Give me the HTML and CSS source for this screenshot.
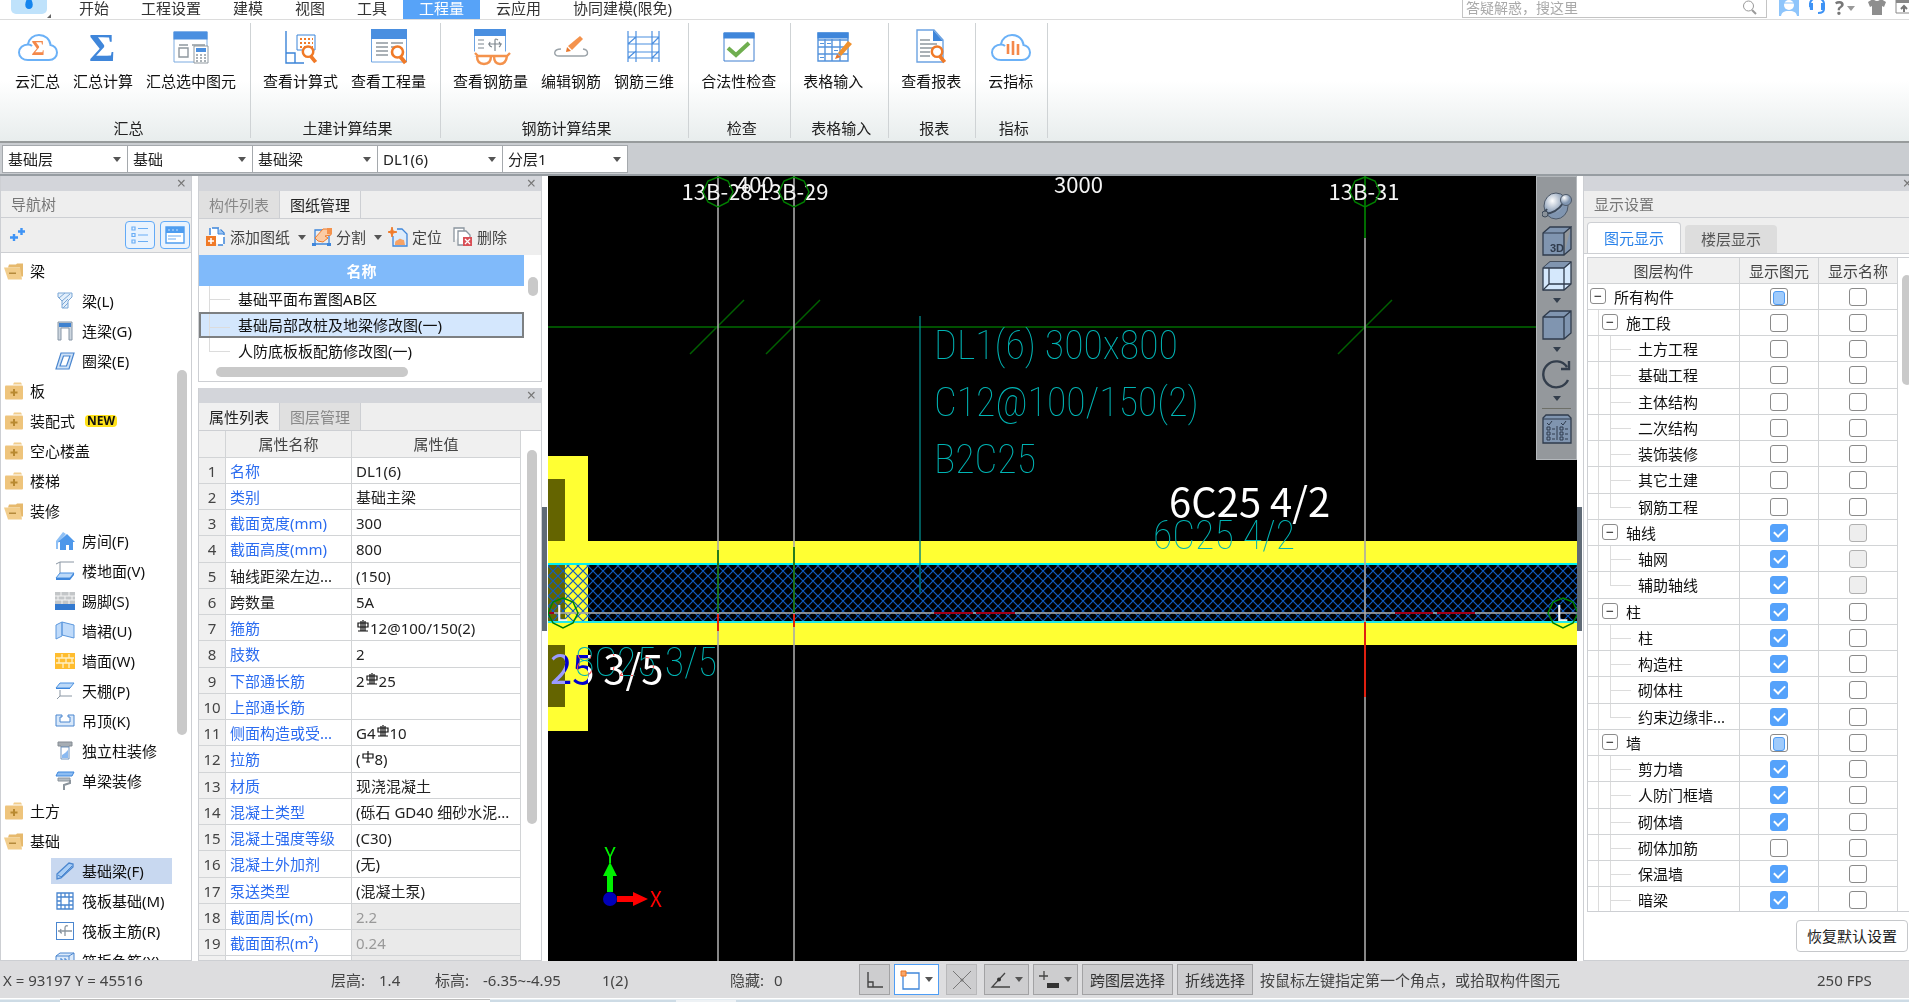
FILE: index.html
```html
<!DOCTYPE html>
<html lang="zh-CN">
<head>
<meta charset="utf-8">
<title>工程量</title>
<link rel="stylesheet" href="styles.css">
</head>
<body>
<svg class="sprite" aria-hidden="true">
  <symbol id="folder-open" viewBox="0 0 20 17"><path d="M5 2h7l1-1h6v13h-3V5H4z" fill="#e6b96d"/><path d="M0 5h16l2 12H4z" fill="#f2cd8b"/><path d="M5 10h7v1.500H5z" fill="#b58a3c"/></symbol>
  <symbol id="folder-closed" viewBox="0 0 20 17"><path d="M9 2l1-2h7l1 2z" fill="#f2cd8b"/><rect x="1" y="3" width="18" height="14" rx="1" fill="#eec47c"/><path d="M9 6.500h2V9h2.500v2H11v2.500H9V11H6.500V9H9z" fill="#b9892f"/></symbol>
  <symbol id="i-beam" viewBox="0 0 20 20"><path d="M3 2h14v4l-4 4v7H7v-7L3 6z" fill="#e3effb" stroke="#7ba7d6"/><path d="M4 7l6-5M7 10l8-7M7 14l6-6M8 17l5-5" stroke="#7ba7d6"/></symbol>
  <symbol id="i-link" viewBox="0 0 20 20"><path d="M3 1h14v18h-3V7H6v12H3z" fill="#cdd6df" stroke="#8796a6"/><path d="M4 2h12v4H4z" fill="#3f82cf"/></symbol>
  <symbol id="i-ring" viewBox="0 0 20 20"><path d="M6 2h13l-5 16H1zM8.500 5L5 15h6.500L15 5z" fill="#cfe2f7" stroke="#4a86cf" stroke-width="1.200"/></symbol>
  <symbol id="i-house" viewBox="0 0 20 20"><path d="M1 10L8 1l3 2-8 9v6H1z" fill="#8fc0f5"/><path d="M3 11l9-8 8 8h-2v8h-4v-5h-3v5H5v-8z" fill="#4d97ea"/></symbol>
  <symbol id="i-floor" viewBox="0 0 20 20"><path d="M19 1H5v12M5 1L1 3" fill="none" stroke="#8a96a3"/><path d="M5 12h14l-4 5H1z" fill="#bcd9f8" stroke="#4a90e0"/><path d="M1 17h14v2H1zM15 17l4-5v2l-4 5z" fill="#3d86dc"/></symbol>
  <symbol id="i-skirt" viewBox="0 0 20 20"><path d="M0 1h20v12H0z" fill="#c3c6c8"/><path d="M0 5h20M0 9h20M6 1v4M14 1v4M3 5v4M10 5v4M17 5v4M7 9v4M14 9v4" stroke="#f4f4f4"/><path d="M0 13h20v6H0z" fill="#3379cf"/></symbol>
  <symbol id="i-dado" viewBox="0 0 20 20"><path d="M1 4l6-3v14l-6 3zM7 1l12 3v13L7 14z" fill="#c0dbfa" stroke="#5c98dd"/></symbol>
  <symbol id="i-brick" viewBox="0 0 20 20"><rect y="2" width="20" height="16" fill="#ffbd2e"/><path d="M1 7h18M1 12h18M7 3v4M14 3v4M4 7v5M11 7v5M17 7v5M8 12v5M14 12v5" stroke="#fff0c4" stroke-width="1.300"/></symbol>
  <symbol id="i-ceil" viewBox="0 0 20 20"><path d="M5 2h14l-4 5H1z" fill="#bcd9f8" stroke="#4a90e0"/><path d="M1 7h14v1H1z" fill="#3d86dc"/><path d="M5 9v6h12M5 15l-3 3" fill="none" stroke="#8a96a3"/></symbol>
  <symbol id="i-drop" viewBox="0 0 20 20"><path d="M1 4h6v2H5v5h10V6h-2V4h6v11H1z" fill="#d8e8fa" stroke="#4a86cf"/></symbol>
  <symbol id="i-column" viewBox="0 0 20 20"><path d="M3 1h14v4h-3v1H6V5H3z" fill="#a6adb3" stroke="#858c93"/><path d="M6 6h8v12H6z" fill="#fff" stroke="#6e94be"/><path d="M7 14l3-2 3-3v8H7z" fill="#8abaf1"/></symbol>
  <symbol id="i-roller" viewBox="0 0 20 20"><path d="M3 1h16l-2 4H1z" fill="#8dbdf2" stroke="#3d86dc"/><path d="M3 7h12v3H3z" fill="#b4bbc2" stroke="#8b949c"/><path d="M15 9v3l-6 2v5" fill="none" stroke="#8b949c" stroke-width="2"/></symbol>
  <symbol id="i-fbeam" viewBox="0 0 20 20"><path d="M2 13L14 2l4 1v3L6 17l-4 1z" fill="#a9cdf5" stroke="#4a86cf" stroke-width="1.300"/><path d="M3 14l3 2L17 5" fill="none" stroke="#4a86cf"/></symbol>
  <symbol id="i-raft" viewBox="0 0 20 20"><path d="M2 2h16v16H2zM6 6h8v8H6zM2 6h4V2M14 2v4h4M2 14h4v4M14 18v-4h4M10 2v4M10 14v4M2 10h4M14 10h4" fill="none" stroke="#4a86cf" stroke-width="1.300"/></symbol>
  <symbol id="i-rebar" viewBox="0 0 20 20"><rect x="1.500" y="1.500" width="17" height="17" fill="#fff" stroke="#4a86cf"/><path d="M3 10h14M10 15V7q0-3 3-2M6 8q-2 4 1 4" fill="none" stroke="#8a959f" stroke-width="1.300"/></symbol>
  <symbol id="i-neg" viewBox="0 0 20 20"><path d="M1 5h13v13H1zM1 5l4-3h14v13l-5 3M14 5l5-3" fill="#dceafa" stroke="#4a86cf"/><path d="M5 8h2v6M9 8h2v6" fill="none" stroke="#3379cf"/></symbol>
  <symbol id="cloud" viewBox="0 0 40 38"><path d="M14 18c-1-1-2.500-1.500-4-1.500C5 16.500 1 20 1 24.500S5 32 10 32h21c5 0 8-3.500 8-7.500s-3-7-6.500-7.500C32 11 27 7 21 7c-5.500 0-10 3.500-11 9" fill="none" stroke="#6bb1f7" stroke-width="2"/></symbol>
  <symbol id="lens" viewBox="0 0 18 20"><circle cx="8" cy="7" r="5.500" fill="#fff" stroke="#f07a28" stroke-width="2.600"/><path d="M11 12l5 6" stroke="#f07a28" stroke-width="4"/></symbol>
  <symbol id="hrb" viewBox="0 0 14 14"><path d="M2 3h10v4H2zM5 1v10M9 1v10M7 0v11M2 11h10" fill="none" stroke="#111" stroke-width="1.200"/></symbol>
  <symbol id="phi" viewBox="0 0 14 14"><path d="M2 3h10v4H2zM7 0v11M5 11h4" fill="none" stroke="#111" stroke-width="1.200"/></symbol>
</svg>

<div class="app">
  <header class="menubar">
    <button class="logo" aria-label="主菜单"><svg viewBox="0 0 56 20" width="56" height="20"><rect x="11" y="-8" width="36" height="22" rx="5" fill="#bfe2fb"/><path d="M29-4c5 6 5 13 0 13s-5-7 0-13z" fill="#1585ee"/><path d="M51 14v4h-4z" fill="#666"/></svg></button>
    <nav class="menu">
      <button>开始</button><button>工程设置</button><button>建模</button><button>视图</button><button>工具</button><button class="active">工程量</button><button>云应用</button><button>协同建模(限免)</button>
    </nav>
    <div class="search">
      <input type="text" aria-label="搜索" placeholder="答疑解惑，搜这里">
      <svg width="16" height="16" viewBox="0 0 16 16"><circle cx="6.500" cy="6" r="5" fill="none" stroke="#999"/><path d="M10 10l4 4" stroke="#999" stroke-width="2"/></svg>
    </div>
    <div class="tools">
      <button aria-label="用户"><svg width="20" height="16" viewBox="0 0 20 16"><path d="M0 0h20v16H0z" fill="#8ec5fb"/><circle cx="10" cy="5" r="5" fill="#fff"/><path d="M2 16c1-5 5-5 8-5s7 0 8 5z" fill="#fff"/><path d="M5 3h10" stroke="#8ec5fb"/></svg></button>
      <button aria-label="客服"><svg width="18" height="16" viewBox="0 0 18 16"><path d="M2 7V4a7 6 0 0 1 14 0v5q0 4-6 4" fill="none" stroke="#3e93f5" stroke-width="2"/><path d="M1 3h4v7H2zM13 3h4l-1 7h-3z" fill="#3e93f5"/></svg></button>
      <button class="help" aria-label="帮助">?<i class="caret"></i></button>
      <button aria-label="皮肤"><svg width="18" height="16" viewBox="0 0 18 16"><path d="M0 2l5-3q4 4 8 0l5 3-2 5-2-1v9H4V6L2 7z" fill="#8e8e8e"/></svg></button>
      <button aria-label="收起"><svg width="18" height="16" viewBox="0 0 18 16"><path d="M1 0h17v13H1z" fill="#fff" stroke="#888"/><path d="M1 0h17v3H1z" fill="#888"/><path d="M9 12V6M6 9l3-3 3 3" fill="none" stroke="#777" stroke-width="2"/></svg></button>
    </div>
  </header>

  <section class="ribbon">
    <div class="group first"><div class="items">
      <button><svg viewBox="0 0 40 38"><use href="#cloud"/><text x="20" y="27" class="sigma small">Σ</text></svg>云汇总</button>
      <button><svg viewBox="0 0 40 38"><text x="19" y="33" class="sigma">Σ</text></svg>汇总计算</button>
      <button><svg viewBox="0 0 40 38"><path d="M3 4h33v30H3z" fill="#fff" stroke="#7cabe0"/><path d="M2.500 3.500h34v8h-34z" fill="#4a8fe0"/><path d="M8 20h9v9H8zM8 17h9M21 17h13" fill="none" stroke="#8f989f" stroke-width="1.400"/><path d="M23 18h14v17H23z" fill="#fff" stroke="#8f989f"/><path d="M25 20h10v4H25z" fill="#4a8fe0"/><path d="M25 27h10M25 30h10M25 33h10" stroke="#8f989f" stroke-width="1.600" stroke-dasharray="2 2"/></svg>汇总选中图元</button>
    </div><h2>汇总</h2></div>
    <div class="group"><div class="items">
      <button><svg viewBox="0 0 40 38"><path d="M5 3v32h18M5 25h9v10" fill="none" stroke="#3b84d8" stroke-width="1.400"/><path d="M16 7h18v15H16z" fill="#fff" stroke="#3b84d8"/><path d="M19 11h13M19 15h13M19 19h13" stroke="#f07a28" stroke-width="2" stroke-dasharray="2 2"/><use href="#lens" x="19" y="17" width="18" height="19"/></svg>查看计算式</button>
      <button><svg viewBox="0 0 40 38"><path d="M2.500 2h35v32h-35z" fill="#fff" stroke="#6ca3e2"/><path d="M2 1h36v10H2z" fill="#4a8fe0"/><path d="M7 15h12M7 19h12M7 23h12M7 27h12M22 15h12M22 19h4" stroke="#8f989f" stroke-width="1.400"/><use href="#lens" x="20" y="17" width="19" height="20"/></svg>查看工程量</button>
    </div><h2>土建计算结果</h2></div>
    <div class="group"><div class="items">
      <button><svg viewBox="0 0 40 38"><path d="M3.500 2h31v26h-31z" fill="#fff" stroke="#6ca3e2"/><path d="M3 1h32v7H3z" fill="#4a8fe0"/><path d="M7 12h6M7 16h6M7 20h6M17 16h14M24 23V12q0-2 3 0M19 14q-2 4 2 5M28 14q3 3 0 5" fill="none" stroke="#7d868d" stroke-width="1.200"/><path d="M3 26h36" stroke="#fff" stroke-width="5"/><path d="M4 25l3 3h29l3-3M6 28q0 8 7 8t7-8M23 28q0 8 6 8t7-8" fill="none" stroke="#f4924c" stroke-width="2.400"/></svg>查看钢筋量</button>
      <button><svg viewBox="0 0 40 38"><path d="M10 21c-8 0-8 7-2 7h24c6 0 6-6 0-7" fill="none" stroke="#9aa2a8" stroke-width="1.400"/><path d="M17 18L29 8l3 3-11 11z" fill="#f4924c"/><path d="M16 19l4 4-5 1z" fill="#e8762a"/></svg>编辑钢筋</button>
      <button><svg viewBox="0 0 40 38"><path d="M4 3v31M12 3v31M28 3v31M35 3v31M4 9h31M4 16h31M4 24h31M4 30h31M4 16l8-7M4 30l8-7M28 16l7-7M28 30l7-7" fill="none" stroke="#4b8fe0" stroke-width="1.200"/></svg>钢筋三维</button>
    </div><h2>钢筋计算结果</h2></div>
    <div class="group"><div class="items">
      <button><svg viewBox="0 0 40 38"><path d="M5 5h30v28H5z" fill="#fff" stroke="#3f7fd0"/><path d="M4.500 4.500h31v6h-31z" fill="#3f86da"/><path d="M9 20l8 7 13-12" fill="none" stroke="#6fae4f" stroke-width="4"/></svg>合法性检查</button>
    </div><h2>检查</h2></div>
    <div class="group wide"><div class="items">
      <button><svg viewBox="0 0 40 38"><path d="M5 5h30v28H5zM5 12h30M5 19h30M5 26h30M12 11v22M19 11v22M27 11v22" fill="#fff" stroke="#5493dc" stroke-width="1.400"/><path d="M4.500 4.500h31v6h-31z" fill="#3f86da"/><path d="M7 15.500h4M14 15.500h4M7 29.500h4M21 22.500h4" stroke="#5493dc"/><path d="M25 25l10-12 4 3-11 12z" fill="#f0912d"/><path d="M24 26l4 3-6 2z" fill="#e8762a"/></svg>表格输入</button>
    </div><h2>表格输入</h2></div>
    <div class="group"><div class="items">
      <button><svg viewBox="0 0 40 38"><path d="M6 2h17l9 10v22H6z" fill="#fff" stroke="#6ca3e2" stroke-width="1.400"/><path d="M22 2l10 11H22z" fill="#3f86da"/><path d="M9 12h10M9 16h17M9 20h19M9 24h10M9 28h10" stroke="#8f989f" stroke-width="1.300"/><use href="#lens" x="18" y="17" width="18" height="19"/></svg>查看报表</button>
    </div><h2>报表</h2></div>
    <div class="group"><div class="items">
      <button><svg viewBox="0 0 40 38"><use href="#cloud"/><path d="M17 26V16M22 27V13M27 27V16" stroke="#f4884a" stroke-width="2.600"/></svg>云指标</button>
    </div><h2>指标</h2></div>
    <div class="group rest"></div>
  </section>

  <div class="combos">
    <span><select aria-label="楼层"><option>基础层</option></select></span>
    <span><select aria-label="构件大类"><option>基础</option></select></span>
    <span><select aria-label="构件类型"><option>基础梁</option></select></span>
    <span><select aria-label="构件"><option>DL1(6)</option></select></span>
    <span><select aria-label="分层"><option>分层1</option></select></span>
  </div>

  <main class="work">
    <aside class="panel nav">
      <div class="strip"><button aria-label="关闭">×</button></div>
      <h3 class="title">导航树</h3>
      <div class="navtools">
        <svg width="16" height="16" viewBox="0 0 16 16"><path d="M4 7v7M0 10.500h8M11.500 1v7M8 4.500h7" stroke="#3e93f5" stroke-width="2.400"/></svg>
        <button class="push" aria-label="列表"><svg width="18" height="18" viewBox="0 0 18 18"><path d="M1 1h3v3H1zM1 7.500h3v3H1zM1 14h3v3H1zM7 2.500h10M7 9h10M7 15.500h10" fill="none" stroke="#6aaef5" stroke-width="1.200"/></svg></button>
        <button aria-label="窗口"><svg width="20" height="18" viewBox="0 0 20 18"><path d="M1 1h18v16H1z" fill="#fff" stroke="#4e9df0" stroke-width="1.400"/><path d="M1 1h18v6H1z" fill="#4e9df0"/><path d="M3 4h2M7 4h2M11 4h2M3 10h13M3 13h8" stroke="#9cc8f8" stroke-width="1.500"/></svg></button>
      </div>
      <ul class="tree">
        <li><button><svg><use href="#folder-open"/></svg>梁</button></li>
        <li class="sub"><button><svg><use href="#i-beam"/></svg>梁(L)</button></li>
        <li class="sub"><button><svg><use href="#i-link"/></svg>连梁(G)</button></li>
        <li class="sub"><button><svg><use href="#i-ring"/></svg>圈梁(E)</button></li>
        <li><button><svg><use href="#folder-closed"/></svg>板</button></li>
        <li><button><svg><use href="#folder-closed"/></svg>装配式<b>NEW</b></button></li>
        <li><button><svg><use href="#folder-closed"/></svg>空心楼盖</button></li>
        <li><button><svg><use href="#folder-closed"/></svg>楼梯</button></li>
        <li><button><svg><use href="#folder-open"/></svg>装修</button></li>
        <li class="sub"><button><svg><use href="#i-house"/></svg>房间(F)</button></li>
        <li class="sub"><button><svg><use href="#i-floor"/></svg>楼地面(V)</button></li>
        <li class="sub"><button><svg><use href="#i-skirt"/></svg>踢脚(S)</button></li>
        <li class="sub"><button><svg><use href="#i-dado"/></svg>墙裙(U)</button></li>
        <li class="sub"><button><svg><use href="#i-brick"/></svg>墙面(W)</button></li>
        <li class="sub"><button><svg><use href="#i-ceil"/></svg>天棚(P)</button></li>
        <li class="sub"><button><svg><use href="#i-drop"/></svg>吊顶(K)</button></li>
        <li class="sub"><button><svg><use href="#i-column"/></svg>独立柱装修</button></li>
        <li class="sub"><button><svg><use href="#i-roller"/></svg>单梁装修</button></li>
        <li><button><svg><use href="#folder-closed"/></svg>土方</button></li>
        <li><button><svg><use href="#folder-open"/></svg>基础</button></li>
        <li class="sub current"><button><svg><use href="#i-fbeam"/></svg>基础梁(F)</button></li>
        <li class="sub"><button><svg><use href="#i-raft"/></svg>筏板基础(M)</button></li>
        <li class="sub"><button><svg><use href="#i-rebar"/></svg>筏板主筋(R)</button></li>
        <li class="sub"><button><svg><use href="#i-neg"/></svg>筏板负筋(X)</button></li>
      </ul>
      <i class="thumb nav-thumb"></i>
    </aside>

    <div class="middle">
      <section class="panel drawings">
        <div class="strip"><button aria-label="关闭">×</button></div>
        <div class="tabs"><button>构件列表</button><button class="active">图纸管理</button></div>
        <div class="actions">
          <button><svg width="20" height="20" viewBox="0 0 20 20"><path d="M4 8V1h9l5 5v12h-6" fill="#fff" stroke="#3f86da" stroke-width="1.500" stroke-dasharray="7 2"/><path d="M12 1v6h6" fill="#9cc5f3" stroke="#3f86da"/><path d="M0 9h10v10H0z" fill="#f07a28"/><path d="M5 11v6M2 14h6" stroke="#fff" stroke-width="1.500"/></svg>添加图纸<i class="caret"></i></button>
          <button><svg width="20" height="20" viewBox="0 0 20 20"><path d="M3 3v14h14V3z" fill="none" stroke="#3f86da" stroke-width="1.300"/><path d="M0 16h4v3H0zM15 16h4v3h-4z" fill="#3f86da"/><path d="M3 11l8-9h8v6l-6 1 3 2-5 4-5-1z" fill="#fbcba4" stroke="#f07a28"/><path d="M15 1h5v6h-5z" fill="#f4924c"/></svg>分割<i class="caret"></i></button>
          <button><svg width="20" height="20" viewBox="0 0 20 20"><path d="M9 2h5l5 5v12H5V9" fill="#dcebfb" stroke="#3f86da" stroke-width="1.300"/><path d="M4 0l1 4 4 1-4 1-1 4-1-4-3-1 3-1z" fill="#f07a28" stroke="#f07a28"/><path d="M7 17c0-5 3-3 4-5 2-1 3 1 5 1l1 5H7z" fill="#f7a265"/></svg>定位</button>
          <button><svg width="20" height="20" viewBox="0 0 20 20"><path d="M1 15V1h10v3M5 4h8l4 4v10H5z" fill="#fff" stroke="#8b959e" stroke-width="1.300"/><path d="M10 10h9v9h-9z" fill="#d95057"/><path d="M12 12l5 5M17 12l-5 5" stroke="#fff" stroke-width="1.300"/></svg>删除</button>
        </div>
        <div class="scroller">
          <table class="sheets">
            <thead><tr><th>名称</th></tr></thead>
            <tbody><tr><td>基础平面布置图AB区</td></tr><tr class="picked"><td>基础局部改桩及地梁修改图(一)</td></tr><tr class="last"><td>人防底板板配筋修改图(一)</td></tr></tbody>
          </table>
          <i class="thumb"></i>
        </div>
        <i class="hthumb"></i>
      </section>

      <section class="panel props">
        <div class="strip"><button aria-label="关闭">×</button></div>
        <div class="tabs"><button class="active">属性列表</button><button>图层管理</button></div>
        <div class="scroller">
          <table class="grid">
            <thead><tr><th class="num"></th><th class="name">属性名称</th><th>属性值</th></tr></thead>
            <tbody>
              <tr><th>1</th><td>名称</td><td>DL1(6)</td></tr>
              <tr><th>2</th><td>类别</td><td>基础主梁</td></tr>
              <tr><th>3</th><td>截面宽度(mm)</td><td>300</td></tr>
              <tr><th>4</th><td>截面高度(mm)</td><td>800</td></tr>
              <tr class="plain"><th>5</th><td>轴线距梁左边...</td><td>(150)</td></tr>
              <tr class="plain"><th>6</th><td>跨数量</td><td>5A</td></tr>
              <tr><th>7</th><td>箍筋</td><td><svg><use href="#hrb"/></svg>12@100/150(2)</td></tr>
              <tr><th>8</th><td>肢数</td><td>2</td></tr>
              <tr><th>9</th><td>下部通长筋</td><td>2<svg><use href="#hrb"/></svg>25</td></tr>
              <tr><th>10</th><td>上部通长筋</td><td></td></tr>
              <tr><th>11</th><td>侧面构造或受...</td><td>G4<svg><use href="#hrb"/></svg>10</td></tr>
              <tr><th>12</th><td>拉筋</td><td>(<svg><use href="#phi"/></svg>8)</td></tr>
              <tr><th>13</th><td>材质</td><td>现浇混凝土</td></tr>
              <tr><th>14</th><td>混凝土类型</td><td>(砾石 GD40 细砂水泥...</td></tr>
              <tr><th>15</th><td>混凝土强度等级</td><td>(C30)</td></tr>
              <tr><th>16</th><td>混凝土外加剂</td><td>(无)</td></tr>
              <tr><th>17</th><td>泵送类型</td><td>(混凝土泵)</td></tr>
              <tr class="locked"><th>18</th><td>截面周长(m)</td><td>2.2</td></tr>
              <tr class="locked"><th>19</th><td>截面面积(m²)</td><td>0.24</td></tr>
              <tr class="locked"><th></th><td></td><td></td></tr>
            </tbody>
          </table>
          <i class="thumb"></i>
        </div>
      </section>
    </div>

    <div class="splitter"><i></i></div>

    <section class="canvas">
      <svg class="drawing" width="100%" height="100%">
        <defs><pattern id="hatch" width="10" height="10" patternUnits="userSpaceOnUse"><path d="M0 0l10 10M10 0L0 10" stroke="#0d5cc4" stroke-width="1.200"/></pattern></defs>
        <rect width="100%" height="100%" fill="#000"/>
        <rect y="280" width="40" height="275" fill="#ffff33"/>
        <rect y="365" width="100%" height="104" fill="#ffff33"/>
        <rect x="40" y="388" width="100%" height="58" fill="#000"/>
        <path d="M0 303h17v62H0zM0 388h17v58H0zM0 469h17v62H0z" fill="#646400"/>
        <rect y="388" width="100%" height="58" fill="url(#hatch)"/>
        <rect y="387" width="100%" height="2" fill="#00f0f0"/>
        <rect y="445" width="100%" height="2" fill="#20e8e8"/>
        <rect y="150" width="100%" height="2" fill="#005000"/>
        <path d="M142 178l54-54M218 178l54-54M790 178l54-54" stroke="#006000" stroke-width="1.500"/>
        <g fill="#a8a8a8" fill-opacity=".8"><rect x="169" width="2" height="100%"/><rect x="245" width="2" height="100%"/><rect x="816" y="62" width="2" height="100%"/><rect y="436" width="100%" height="2"/></g>
        <path d="M170 374v63M246 371v66" stroke="#006c00" stroke-width="2" stroke-opacity=".8"/>
        <path d="M170 438v17M246 438v13M817 446v75" stroke="#e02010" stroke-width="2"/>
        <path d="M386 437h39M428 437h39M847 437h38M889 437h38M0 437h6" stroke="#a00018" stroke-width="2"/>
        <path d="M817 0v62" stroke="#006c00" stroke-width="2"/>
        <path d="M372 140v277" stroke="#008080" stroke-opacity=".7" stroke-width="2"/>
        <g class="cad"><text x="386" y="183">DL1(6) 300x800</text><text x="386" y="240">C12@100/150(2)</text><text x="386" y="297">B2C25</text><text x="605" y="373">6C25 4/2</text><text x="27" y="500">8C25 3/5</text></g>
        <g class="label"><text x="169" y="24" class="mid">13B-28</text><text x="245" y="24" class="mid">13B-29</text><text x="816" y="24" class="mid">13B-31</text><text x="189" y="17">400</text><text x="506" y="17">3000</text><text x="8" y="445">L</text><text x="1008" y="445">L</text></g>
        <g fill="none" stroke="#008000" stroke-width="1.500"><path id="oct" d="M170 1l10 4 5 11-5 10-10 5-10-5-5-10 5-11z"/><use href="#oct" x="76"/><use href="#oct" x="647"/><use href="#oct" x="-155" y="421"/><use href="#oct" x="845" y="421"/></g>
        <g class="note"><text x="621" y="341">6C25 4/2</text><text x="2" y="508">25 3/5</text></g>
        <path d="M59 716v-16h-4l7-14 7 14h-4v16z" fill="#00f000"/>
        <path d="M69 720h16v-4l15 7-15 7v-4H69z" fill="#f00"/>
        <circle cx="62" cy="723" r="7" fill="#0000b8"/>
        <g class="axis"><text x="62" y="687" fill="#00f000">Y</text><text x="108" y="731" fill="#f00">X</text></g>
      </svg>
      <div class="viewtools">
        <button aria-label="动态观察"><svg width="30" height="30" viewBox="0 0 30 30"><defs><radialGradient id="ball" cx=".35" cy=".3"><stop offset="0" stop-color="#fff"/><stop offset="1" stop-color="#8095b0"/></radialGradient></defs><ellipse cx="14" cy="15" rx="12" ry="13" fill="url(#ball)" stroke="#4c5868"/><path d="M2 23q12 0 20-12M1 23l4-5" fill="none" stroke="#3c4858" stroke-width="2"/><circle cx="24" cy="9" r="5.500" fill="url(#ball)" stroke="#4c5868"/><circle cx="3" cy="23" r="3" fill="#8a929a" stroke="#3c4858"/></svg></button>
        <button aria-label="三维"><svg width="30" height="30" viewBox="0 0 30 30"><path d="M1 7l7-6h21l-7 6v22H1zM22 29l7-6V1" fill="#8095b0" stroke="#2f3b4c" stroke-width="1.300"/><path d="M1 7h21" stroke="#2f3b4c"/><text x="8" y="26" class="cube-text">3D</text></svg></button>
        <button aria-label="线框"><svg width="30" height="30" viewBox="0 0 30 30"><path d="M1 7l7-6h21v22l-7 6H1z" fill="#d5e8fc" stroke="#2f3b4c" stroke-width="1.300"/><path d="M1 7l7-6h21l-7 6z" fill="#8095b0"/><path d="M1 7h21v22M22 7l7-6M7 7v16h22M7 23l-6 6" fill="none" stroke="#2f3b4c" stroke-width="1.300"/></svg><i class="caret"></i></button>
        <button aria-label="实体"><svg width="30" height="30" viewBox="0 0 30 30"><path d="M1 7l7-6h21v22l-7 6H1zM1 7h21v22M22 7l7-6" fill="#8095b0" stroke="#2f3b4c" stroke-width="1.300"/></svg><i class="caret"></i></button>
        <button aria-label="旋转"><svg width="30" height="30" viewBox="0 0 30 30"><path d="M25 8A13 13 0 1 0 26 21M27 2v8h-8" fill="none" stroke="#333e4c" stroke-width="2.400"/></svg><i class="caret"></i></button>
        <hr>
        <button aria-label="显示设置"><svg width="30" height="30" viewBox="0 0 30 30"><path d="M1 4l3-3h22l3 3v25H1z" fill="#8095b0" stroke="#2f3b4c" stroke-width="1.300"/><path d="M1 5h28M15 12v14M5 9l2 2 3-4M19 9l2 2 3-4M5 13h3v3H5zM5 18h3v3H5zM5 23h3v3H5zM18 13h3v3h-3zM18 18h3v3h-3zM18 23h3v3h-3zM10 15h3M10 20h3M10 25h3M23 15h3M23 20h3M23 25h3" fill="none" stroke="#2f3b4c"/></svg></button>
      </div>
    </section>

    <div class="splitter"><i></i></div>

    <aside class="panel display">
      <div class="strip"><button aria-label="关闭">×</button></div>
      <h3 class="title">显示设置</h3>
      <div class="cardtabs"><button class="active">图元显示</button><button>楼层显示</button></div>
      <div class="scroller">
        <table class="grid layers">
          <thead><tr><th>图层构件</th><th class="tick">显示图元</th><th class="tick">显示名称</th></tr></thead>
          <tbody>
            <tr class="l0"><td><button>−</button>所有构件</td><td><input type="checkbox" class="partial" aria-label="所有构件 图元"></td><td><input type="checkbox" aria-label="所有构件 名称"></td></tr>
            <tr class="l1"><td><button>−</button>施工段</td><td><input type="checkbox" aria-label="施工段 图元"></td><td><input type="checkbox" aria-label="施工段 名称"></td></tr>
            <tr class="l2"><td>土方工程</td><td><input type="checkbox" aria-label="土方工程 图元"></td><td><input type="checkbox" aria-label="土方工程 名称"></td></tr>
            <tr class="l2"><td>基础工程</td><td><input type="checkbox" aria-label="基础工程 图元"></td><td><input type="checkbox" aria-label="基础工程 名称"></td></tr>
            <tr class="l2"><td>主体结构</td><td><input type="checkbox" aria-label="主体结构 图元"></td><td><input type="checkbox" aria-label="主体结构 名称"></td></tr>
            <tr class="l2"><td>二次结构</td><td><input type="checkbox" aria-label="二次结构 图元"></td><td><input type="checkbox" aria-label="二次结构 名称"></td></tr>
            <tr class="l2"><td>装饰装修</td><td><input type="checkbox" aria-label="装饰装修 图元"></td><td><input type="checkbox" aria-label="装饰装修 名称"></td></tr>
            <tr class="l2"><td>其它土建</td><td><input type="checkbox" aria-label="其它土建 图元"></td><td><input type="checkbox" aria-label="其它土建 名称"></td></tr>
            <tr class="l2 end"><td>钢筋工程</td><td><input type="checkbox" aria-label="钢筋工程 图元"></td><td><input type="checkbox" aria-label="钢筋工程 名称"></td></tr>
            <tr class="l1"><td><button>−</button>轴线</td><td><input type="checkbox" checked aria-label="轴线 图元"></td><td><input type="checkbox" disabled aria-label="轴线 名称"></td></tr>
            <tr class="l2"><td>轴网</td><td><input type="checkbox" checked aria-label="轴网 图元"></td><td><input type="checkbox" disabled aria-label="轴网 名称"></td></tr>
            <tr class="l2 end"><td>辅助轴线</td><td><input type="checkbox" checked aria-label="辅助轴线 图元"></td><td><input type="checkbox" disabled aria-label="辅助轴线 名称"></td></tr>
            <tr class="l1"><td><button>−</button>柱</td><td><input type="checkbox" checked aria-label="柱类 图元"></td><td><input type="checkbox" aria-label="柱类 名称"></td></tr>
            <tr class="l2"><td>柱</td><td><input type="checkbox" checked aria-label="柱 图元"></td><td><input type="checkbox" aria-label="柱 名称"></td></tr>
            <tr class="l2"><td>构造柱</td><td><input type="checkbox" checked aria-label="构造柱 图元"></td><td><input type="checkbox" aria-label="构造柱 名称"></td></tr>
            <tr class="l2"><td>砌体柱</td><td><input type="checkbox" checked aria-label="砌体柱 图元"></td><td><input type="checkbox" aria-label="砌体柱 名称"></td></tr>
            <tr class="l2 end"><td>约束边缘非...</td><td><input type="checkbox" checked aria-label="约束边缘 图元"></td><td><input type="checkbox" aria-label="约束边缘 名称"></td></tr>
            <tr class="l1"><td><button>−</button>墙</td><td><input type="checkbox" class="partial" aria-label="墙 图元"></td><td><input type="checkbox" aria-label="墙 名称"></td></tr>
            <tr class="l2"><td>剪力墙</td><td><input type="checkbox" checked aria-label="剪力墙 图元"></td><td><input type="checkbox" aria-label="剪力墙 名称"></td></tr>
            <tr class="l2"><td>人防门框墙</td><td><input type="checkbox" checked aria-label="人防门框墙 图元"></td><td><input type="checkbox" aria-label="人防门框墙 名称"></td></tr>
            <tr class="l2"><td>砌体墙</td><td><input type="checkbox" checked aria-label="砌体墙 图元"></td><td><input type="checkbox" aria-label="砌体墙 名称"></td></tr>
            <tr class="l2"><td>砌体加筋</td><td><input type="checkbox" aria-label="砌体加筋 图元"></td><td><input type="checkbox" aria-label="砌体加筋 名称"></td></tr>
            <tr class="l2"><td>保温墙</td><td><input type="checkbox" checked aria-label="保温墙 图元"></td><td><input type="checkbox" aria-label="保温墙 名称"></td></tr>
            <tr class="l2"><td>暗梁</td><td><input type="checkbox" checked aria-label="暗梁 图元"></td><td><input type="checkbox" aria-label="暗梁 名称"></td></tr>
          </tbody>
        </table>
        <i class="thumb"></i>
      </div>
      <div class="reset"><button>恢复默认设置</button></div>
    </aside>
  </main>

  <footer class="status">
    <span class="xy">X = 93197 Y = 45516</span>
    <span class="pair"><span>层高:</span>1.4</span>
    <span class="pair level"><span>标高:</span>-6.35~-4.95</span>
    <span class="count">1(2)</span>
    <span class="hidden-count"><span>隐藏:</span>0</span>
    <div class="modes">
      <button class="icon" aria-label="正交"><svg width="20" height="20" viewBox="0 0 20 20"><path d="M3 2v15h15M3 12h5v5" fill="none" stroke="#444" stroke-width="1.400"/></svg></button>
      <button class="drop on" aria-label="框选"><svg width="20" height="20" viewBox="0 0 20 20"><path d="M3 3h16v16H3z" fill="none" stroke="#3f86da" stroke-width="1.300"/><path d="M1 1h5v5H1z" fill="#f9a66b" stroke="#ea7420"/></svg><i class="caret"></i></button>
      <button class="icon off" aria-label="交点"><svg width="20" height="20" viewBox="0 0 20 20"><path d="M1 1l18 18M19 1L1 19" stroke="#777"/><circle cx="10" cy="10" r="1.500" fill="#777"/></svg></button>
      <button class="drop" aria-label="角度"><svg width="20" height="20" viewBox="0 0 20 20"><path d="M15 3L2 17h18" fill="none" stroke="#444" stroke-width="1.300"/><circle cx="9" cy="9.500" r="2" fill="#333"/></svg><i class="caret"></i></button>
      <button class="drop" aria-label="偏移"><svg width="20" height="20" viewBox="0 0 20 20"><path d="M5 1v9M0 6h9" stroke="#444" stroke-width="1.300"/><path d="M8 13h12v5H8z" fill="#333"/></svg><i class="caret"></i></button>
      <button>跨图层选择</button><button>折线选择</button>
    </div>
    <span class="hint">按鼠标左键指定第一个角点，或拾取构件图元</span>
    <span class="fps">250 FPS</span>
  </footer>
  <div class="taskbar"><i></i><i></i><i></i><i></i><i></i></div>
</div>
</body>
</html>
```

FILE: styles.css
```css
* { box-sizing: border-box; }
body {
  margin: 0;
  font: 15px/20px "Noto Sans", "Noto Sans CJK SC", sans-serif;
  color: #222;
  background: #fff;
}
button, input, select { font: inherit; color: inherit; margin: 0; padding: 0; border: 0; background: none; border-radius: 0; }
button { white-space: nowrap; }
h2, h3 { margin: 0; font: inherit; }
ul { margin: 0; padding: 0; list-style: none; }
.sprite { display: none; }
.app { height: 100vh; display: flex; flex-direction: column; overflow: hidden; }
.caret { display: inline-block; border: 4px solid transparent; border-top: 5px solid #555; border-bottom: 0; }

/* menu bar */
.menubar { display: flex; height: 20px; flex: none; border-bottom: 1px solid #dcdcdc; line-height: 16px; }
.logo { width: 63px; height: 19px; flex: none; }
.logo svg { display: block; }
.menu { display: flex; flex: 1; }
.menu button { padding: 0 16px 4px; color: #333; }
.menu .active { background: #57a3f8; color: #fff; }
.search { display: flex; align-items: center; width: 305px; height: 18px; border: 1px solid #c4c4c4; border-top: 0; padding: 0 8px 2px 3px; }
.search input { flex: 1; min-width: 0; font-size: 14px; line-height: 16px; height: 16px; outline: 0; }
.search input::placeholder { color: #a9a9a9; opacity: 1; }
.tools { display: flex; gap: 9px; width: 142px; flex: none; padding-left: 12px; height: 16px; overflow: hidden; }
.tools button { flex: none; }
.tools svg { display: block; }
.tools .help { display: flex; align-items: center; gap: 3px; width: 24px; font-size: 19px; font-weight: bold; color: #777; }
.help .caret { border-top-color: #999; }

/* ribbon */
.ribbon { display: flex; height: 121px; flex: none; background: linear-gradient(#fff 50%, #e8eded); }
.group { display: flex; flex-direction: column; margin: 3px 0; padding: 5px 14px 0 12px; border-left: 1px solid #cfd3d5; }
.group.first { border-left: 0; padding-left: 15px; }
.group.wide { padding-right: 25px; }
.group.rest { flex: 1; }
.items { display: flex; gap: 13px; flex: 1; }
.items button { display: flex; flex-direction: column; align-items: center; gap: 5px; color: #111; height: 64px; }
.items svg { width: 40px; height: 38px; }
.group h2 { text-align: center; line-height: 20px; height: 20px; color: #222; margin: 0 -18px 0 -12px; }
.group.wide h2 { margin-right: -28px; }
.sigma { font: bold 40px "Liberation Serif", serif; fill: #3f86da; text-anchor: middle; }
.sigma.small { font-size: 20px; fill: #f4884a; }

/* selectors under the ribbon */
.combos { display: flex; height: 35px; flex: none; padding: 2px 2px 3px; background: #cacdd1; border-top: 2px solid #979b9c; border-bottom: 2px solid #979da2; }
.combos span { position: relative; width: 125px; }
.combos select { appearance: none; width: 126px; height: 28px; padding: 0 5px; border: 1px solid #a5a9ad; background: #fff; }
.combos span::after { content: ""; position: absolute; right: 6px; top: 12px; border: 4px solid transparent; border-top: 5px solid #555; border-bottom: 0; }

/* work area */
.work { display: flex; flex: 1; min-height: 0; }
.panel { display: flex; flex-direction: column; position: relative; min-height: 0; overflow: hidden; border: 1px solid #cdcfd3; border-top: 0; background: #fff; }
.strip { display: flex; justify-content: flex-end; height: 15px; flex: none; background: #d3d5da; padding-right: 5px; }
.strip button { line-height: 15px; height: 15px; font-size: 16px; color: #777; }
.title { height: 27px; flex: none; padding-left: 10px; line-height: 26px; color: #777; background: #eee; border-bottom: 1px solid #cdcfd3; }
.thumb { display: block; width: 10px; border-radius: 5px; background: #c9c9c9; }

.nav { width: 192px; margin-right: 6px; flex: none; }
.navtools { display: flex; align-items: center; gap: 5px; height: 35px; flex: none; padding: 0 1px 0 9px; background: #eee; border-bottom: 1px solid #cdcfd3; }
.navtools button { display: grid; place-items: center; width: 30px; height: 28px; border: 1px solid #62aaf7; border-radius: 4px; background: #e9f3fe; }
.navtools .push { margin-left: auto; }
.tree { flex: 1; min-height: 0; overflow: hidden; padding-top: 3px; }
.tree li { height: 30px; padding: 2px 0 2px 3px; }
.tree button { display: flex; align-items: center; width: 121px; height: 26px; gap: 6px; color: #111; }
.tree svg { width: 20px; height: 20px; flex: none; }
.tree .sub { padding-left: 50px; }
.tree .sub button { padding-left: 4px; gap: 7px; }
.tree .current button { background: #c8d8f0; }
.tree b { margin-left: 4px; padding: 0 2px; font-size: 12px; line-height: 12px; background: #ffe21a; border-radius: 4px; }
.nav-thumb { position: absolute; right: 4px; top: 194px; height: 365px; }

.middle { display: flex; flex-direction: column; gap: 6px; width: 344px; flex: none; }
.drawings { height: 206px; flex: none; }
.props { flex: 1; }
.tabs { display: flex; height: 28px; flex: none; background: #eee; border-bottom: 1px solid #cdcfd3; }
.tabs button { width: 81px; background: #e0e0e0; border-right: 1px solid #cdcfd3; color: #888; height: 27px; }
.tabs .active { background: #f0f0f0; color: #222; }
.actions { display: flex; gap: 6px; height: 36px; flex: none; align-items: center; padding-left: 7px; background: #eee; }
.actions button { display: flex; align-items: center; gap: 4px; color: #444; }
.actions button:last-child { margin-left: 5px; }
.actions .caret { margin-left: 4px; }
.scroller { display: flex; flex: 1; min-height: 0; overflow: hidden; }
table { border-collapse: separate; border-spacing: 0; table-layout: fixed; }
th, td { font-weight: normal; padding: 0; line-height: 20px; white-space: nowrap; overflow: hidden; }
.sheets { width: 325px; height: 109px; }
.sheets th { height: 31px; background: #80bafa; color: #fff; font-weight: bold; }
.sheets td { height: 26px; padding-left: 39px; position: relative; color: #111; }
.sheets .picked td { background: #d4e7fd; border: 2px solid #7d8082; padding-left: 37px; }
.sheets td::before { content: ""; position: absolute; left: 10px; top: 0; width: 20px; height: 13px; border: 1px solid #dcdcdc; border-width: 0 0 1px 1px; }
.sheets td::after { content: ""; position: absolute; left: 10px; top: 13px; bottom: 0; border-left: 1px solid #dcdcdc; }
.sheets .last td::after { display: none; }
.sheets .picked td::before, .sheets .picked td::after { left: 8px; }
.drawings .thumb { height: 19px; margin: 22px 0 0 4px; }
.hthumb { width: 192px; height: 10px; flex: none; margin: 3px 0 4px 17px; border-radius: 5px; background: #c9c9c9; }

.grid { flex: none; }
.grid th { background: #f0f0f0; color: #444; }
.grid th, .grid td { height: 26px; border-right: 1px solid #d2d4d6; border-bottom: 1px solid #d2d4d6; }
.grid thead th { height: 27px; }
.grid tbody tr:nth-child(4n) > * { height: 27px; }
.props .grid { width: 322px; }
.num { width: 27px; }
.name { width: 126px; }
.props td { padding-left: 4px; }
.props td:nth-child(2) { color: #2b6cf0; }
.props .plain td:nth-child(2) { color: #222; }
.props .locked td:last-child { background: #eaeaea; color: #999; }
.props td svg { width: 14px; height: 14px; vertical-align: 0; }
.props .scroller .thumb { margin: 19px 0 0 6px; height: 374px; }

.splitter { width: 6px; flex: none; display: flex; align-items: center; }
.splitter i { display: block; width: 5px; height: 124px; background: #5f6a76; }

/* model view */
.canvas { position: relative; flex: 1; min-width: 0; overflow: hidden; background: #000; }
.drawing { position: absolute; inset: 0; }
.cad { font: 100 40px "Roboto Condensed", "Liberation Sans Narrow", Roboto, sans-serif; fill: #00b4b4; }
.label { font: 22px "Noto Sans CJK SC", sans-serif; fill: #f4f4f4; }
.label .mid { text-anchor: middle; }
.note { font: 40px "Noto Sans CJK SC", sans-serif; fill: #fff; mix-blend-mode: difference; }
.axis { font: 21px "Noto Sans CJK SC", sans-serif; text-anchor: middle; }
.cube-text { font: bold 11px "Liberation Sans", sans-serif; fill: #2f3b4c; }
.viewtools { position: absolute; top: 0; right: 0; display: flex; flex-direction: column; align-items: center; gap: 5px; width: 41px; height: 284px; padding-top: 14px; background: #94989c; border: 1px solid #b4b8bc; }
.viewtools button { display: flex; flex-direction: column; align-items: center; gap: 7px; }
.viewtools svg { display: block; }
.viewtools .caret { border-top-color: #333e4c; margin-bottom: 2px; }
.viewtools hr { width: 29px; margin: 0; border: 0; border-top: 1px solid #6d6f68; }

/* display settings */
.display { width: 326px; flex: none; border-right: 0; }
.display .strip { padding-right: 0; }
.display .strip button { margin-right: -3px; }
.cardtabs { display: flex; align-items: flex-end; gap: 4px; height: 36px; flex: none; padding-left: 3px; background: #eee; border-bottom: 1px solid #cdcfd3; }
.cardtabs button { width: 92px; height: 28px; background: #ddd; color: #555; border-radius: 4px 4px 0 0; }
.cardtabs .active { width: 94px; height: 31px; background: #fff; color: #2b83ea; border: 1px solid #cdcfd3; border-bottom: 0; }
.display .scroller { margin: 3px 0 0 3px; border: 1px solid #cdcfd3; border-width: 1px 0 1px 1px; flex: 1; }
.layers { width: 310px; }
.layers thead th { height: 26px; }
.tick { width: 79px; }
.layers td { text-align: center; position: relative; }
.layers td:first-child { text-align: left; color: #111; }
.layers td button { width: 16px; height: 16px; margin-right: 8px; border: 1px solid #8c8c8c; border-radius: 3px; background: #fff; line-height: 12px; font-size: 14px; vertical-align: 2px; position: relative; z-index: 1; }
.l0 td:first-child { padding-left: 2px; }
.l1 td:first-child { padding-left: 14px; }
.l2 td:first-child { padding-left: 50px; }
.l1 td:first-child, .l2 td:first-child { background: linear-gradient(#dcdcdc, #dcdcdc) 10px 0 / 1px 100% no-repeat; }
.l2 td:first-child::before { content: ""; position: absolute; left: 22px; top: 0; width: 20px; height: 13px; border: 1px solid #dcdcdc; border-width: 0 0 1px 1px; }
.l2 td:first-child::after { content: ""; position: absolute; left: 22px; top: 13px; bottom: 0; border-left: 1px solid #dcdcdc; }
.l2.end td:first-child::after { display: none; }
.layers input { appearance: none; display: block; width: 18px; height: 18px; margin: 0 auto; border: 1px solid #8a8a8a; border-radius: 3px; background: #fff; }
.layers input:checked { border-color: #55a2fb; background: #55a2fb; }
.layers input:checked::after { content: ""; display: block; width: 5px; height: 9px; margin: 1px auto 0; border: solid #fff; border-width: 0 2px 2px 0; transform: rotate(45deg); }
.layers input:disabled { background: #eee; border-color: #b0b0b0; }
.layers .partial { padding: 2px; }
.layers .partial::after { content: ""; display: block; height: 12px; border: 1px solid #4e9cf5; border-radius: 3px; background: #a0cbfb; }
.display .thumb { margin: 17px 0 0 4px; height: 110px; flex: none; }
.reset { display: flex; justify-content: flex-end; height: 48px; flex: none; padding: 8px 1px; }
.reset button { width: 112px; height: 32px; border: 1px solid #c6c8cb; border-radius: 4px; background: #fff; }

/* status bar */
.status { display: flex; align-items: center; height: 38px; flex: none; padding-left: 3px; background: #dddddf; color: #444; border-bottom: 1px solid #fff; white-space: nowrap; }
.xy { width: 328px; }
.pair { display: flex; gap: 14px; width: 104px; }
.level { width: 167px; }
.count { width: 128px; }
.hidden-count { display: flex; gap: 10px; width: 129px; }
.modes { display: flex; gap: 4px; }
.modes button { display: flex; align-items: center; justify-content: center; height: 31px; padding: 0 7px; border: 1px solid #a2a2a4; background: #cdcdcf; color: #333; }
.modes .icon { width: 31px; padding: 0; }
.modes .drop { width: 45px; padding: 0 5px; justify-content: space-between; }
.modes .on { background: #fff; border: 1px solid #4e9df5; }
.modes .off { margin: 0 3px; border-color: #b8b8ba; }
.hint { padding-left: 7px; flex: 1; }
.fps { width: 92px; }
.taskbar { display: flex; height: 3px; flex: none; background: #cddbe5; }
.taskbar i { width: 60px; border-top: 1px solid #e6edf2; }
.taskbar i:nth-child(2) { width: 430px; background: #fff; border-color: #bbb; }
.taskbar i:nth-child(3) { width: 186px; }
.taskbar i:nth-child(4) { background: #eef2f5; }
.taskbar i:last-child { flex: 1; }
```
